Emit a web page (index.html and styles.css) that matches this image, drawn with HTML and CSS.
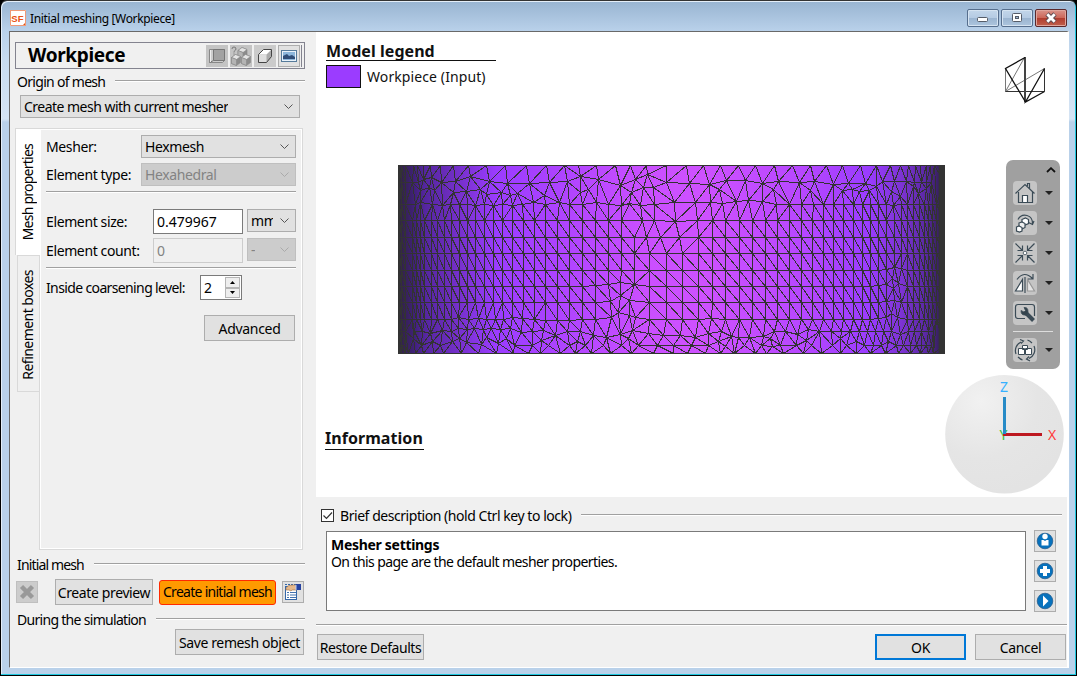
FILE: index.html
```html
<!DOCTYPE html>
<html lang="en">
<head>
<meta charset="utf-8">
<title>Initial meshing [Workpiece]</title>
<link rel="stylesheet" href="styles.css">
</head>
<body>
<div class="window">
  <header class="titlebar">
    <svg class="app-icon" viewBox="0 0 16 16"><rect width="16" height="16" fill="#fff"/><path d="M.5 0V15.5H16M0 .5H15.5V16" fill="none" stroke="#ee9a78"/><text x="1.3" y="11.5" class="logo-text">SF</text><path d="M13 15h2v-2z" fill="#e05010"/></svg>
    <span class="title">Initial meshing [Workpiece]</span>
    <div class="caption-buttons">
      <span class="cap"><svg width="30" height="16"><rect x="9.5" y="7.5" width="10" height="4" rx="1" fill="#fff" stroke="#555c68"/></svg></span>
      <span class="cap"><svg width="30" height="16"><rect x="10.5" y="3.5" width="9" height="8" rx="1" fill="#fff" stroke="#555c68"/><rect x="13.5" y="6.5" width="3" height="2" fill="#9db5d0" stroke="#555c68"/></svg></span>
      <span class="cap close"><svg width="30" height="16"><path d="M11 4l8 8M19 4l-8 8" stroke="#5d4a50" stroke-width="4.6"/><path d="M11.3 4.3l7.4 7.4M18.7 4.3l-7.4 7.4" stroke="#fff" stroke-width="2.8"/></svg></span>
    </div>
  </header>

  <main class="client">
    <aside class="left">
      <div class="object-header">
        <b>Workpiece</b>
        <div class="object-tools">
          <span class="tool off"><svg viewBox="0 0 22 22"><path d="M3.500 4.500h15v11l-2 2h-13z" fill="#ccc" stroke="#888"/><path d="M7.500 4.500h11v11h-11z" fill="#a2a2a2" stroke="#777"/><path d="M3.500 17.500l4-2" stroke="#777"/><path d="M4.500 5v12" stroke="#eee"/></svg></span>
          <span class="tool off"><svg viewBox="0 0 22 22"><g stroke="#888" stroke-width=".6"><g id="cube"><path d="M8 5.500l4-3 5 2v6l-4 3-5-2z" fill="#8c8c8c"/><path d="M8 5.500l4-3 5 2-4 3z" fill="#e4e4e4"/><path d="M8 5.500l5 2v6l-5-2z" fill="#b4b4b4"/></g><use href="#cube" x="-6.500" y="7"/><use href="#cube" x="3.500" y="7"/></g><path d="M2 4q0-2 2-2t2 2q0 1-2 2.500v1M4 8.500v1" fill="none" stroke="#777"/></svg></span>
          <span class="tool"><svg viewBox="0 0 22 22"><path d="M4.500 9.500l5-5h8v7l-5 6h-8z" fill="#aaa"/><path d="M4.500 9.500l5-5h8l-5 5z" fill="#fff"/><path d="M4.500 9.500h8v8h-8z" fill="#dedede"/><path d="M4.500 9.500l5-5h8v7l-5 6h-8z" fill="none" stroke="#444"/></svg></span>
          <span class="tool lit"><svg viewBox="1 1 20 20"><rect x="3.500" y="5.500" width="15" height="11" fill="#e9f2fa" stroke="#567b9b"/><rect x="5" y="7" width="12" height="8" fill="#8db7dc"/><path d="M5 11l2-1 2-1 2 2 3-1 3 2v2H5z" fill="#304e78"/></svg></span>
        </div>
      </div>

      <div class="group-title origin"><span>Origin of mesh</span><i></i></div>
      <div class="combo combo-origin"><span>Create mesh with current mesher</span><svg class="chev"><path d="M.5 .5l4 4 4-4"/></svg></div>

      <section class="tabs">
        <nav>
          <div class="tab active"><span>Mesh properties</span></div>
          <div class="tab"><span>Refinement boxes</span></div>
        </nav>
        <div class="page">
          <div class="row"><label>Mesher:</label><div class="combo wide"><span>Hexmesh</span><svg class="chev"><path d="M.5 .5l4 4 4-4"/></svg></div></div>
          <div class="row"><label>Element type:</label><div class="combo wide disabled"><span>Hexahedral</span><svg class="chev"><path d="M.5 .5l4 4 4-4"/></svg></div></div>
          <hr class="rule first">
          <div class="row size"><label>Element size:</label><div class="field">0.479967</div><div class="combo unit"><span>mm</span><svg class="chev"><path d="M.5 .5l4 4 4-4"/></svg></div></div>
          <div class="row size"><label>Element count:</label><div class="field disabled">0</div><div class="combo unit disabled"><span>-</span><svg class="chev"><path d="M.5 .5l4 4 4-4"/></svg></div></div>
          <hr class="rule second">
          <div class="row coarse"><label>Inside coarsening level:</label><div class="field spin">2<div class="spin-buttons"><span><svg width="5" height="3"><path d="M0 3L2.500 0 5 3z"/></svg></span><span><svg width="5" height="3"><path d="M0 0L2.500 3 5 0z"/></svg></span></div></div></div>
          <div class="button advanced">Advanced</div>
        </div>
      </section>

      <div class="group-title initial"><span>Initial mesh</span><i></i></div>
      <div class="mesh-actions">
        <span class="icon-button off"><svg viewBox="1 1 20 20"><path d="M5.500 5.500l11 11M16.500 5.500l-11 11" stroke="#999" stroke-width="4.500"/></svg></span>
        <div class="button preview">Create preview</div>
        <div class="button primary">Create initial mesh</div>
        <span class="icon-button"><svg viewBox="1 1 20 20"><rect x="3.500" y="5.500" width="11" height="13" fill="#fff" stroke="#3567a8"/><path d="M3 3.500h12" stroke="#3567a8" stroke-dasharray="2 1"/><path d="M5 11.500h2m1 0h6M5 14h2m1 0h6M5 16.500h2m1 0h6" stroke="#4272ad"/><path d="M4 7q2-3 6-3h5v5h-5l-1 1-2-1H4z" fill="#e7b98a" stroke="#986b44" stroke-width=".6"/><path d="M14 3h5v6h-5z" fill="#2743a0"/><path d="M14 4v5" stroke="#b8cdf6"/></svg></span>
      </div>
      <div class="group-title during"><span>During the simulation</span><i></i></div>
      <div class="button save">Save remesh object</div>
    </aside>

    <section class="right">
      <div class="viewport">
        <div class="legend">
          <h2>Model legend</h2>
          <div class="legend-item"><i></i><span>Workpiece (Input)</span></div>
        </div>
        <h2 class="information">Information</h2>
        <svg class="mesh" width="547" height="189" viewBox="398 165 547 189">
          <defs><linearGradient id="skin" gradientUnits="userSpaceOnUse" x1="398" x2="945" y1="0" y2="0">
            <stop offset="0" stop-color="#333"/><stop offset=".006" stop-color="#32224a"/><stop offset=".03" stop-color="#40207a"/><stop offset=".05" stop-color="#5526a0"/><stop offset=".09" stop-color="#6a2cbc"/><stop offset=".18" stop-color="#9b3cff"/><stop offset=".27" stop-color="#a941ff"/><stop offset=".45" stop-color="#ca4fff"/><stop offset=".56" stop-color="#ce51ff"/><stop offset=".74" stop-color="#b747ff"/><stop offset=".86" stop-color="#9a3cff"/><stop offset=".92" stop-color="#7d33d4"/><stop offset=".965" stop-color="#5a28a4"/><stop offset=".987" stop-color="#3a2066"/><stop offset=".99" stop-color="#333"/><stop offset="1" stop-color="#333"/>
          </linearGradient></defs>
          <rect x="398" y="165" width="547" height="189" fill="url(#skin)"/>
          <path id="edges" class="edges"/>
          <rect x="398.500" y="165.500" width="546" height="188" fill="none" stroke="#333"/>
        </svg>
        <svg class="camera" width="44" height="50" viewBox="1004 56 44 50"><path d="M1005.500 68.500v23M1005.500 91.500l19-34M1005.500 91.500l39-23" stroke="#777" fill="none"/><path d="M1005.500 91.500h39v-23" stroke="#333" fill="none"/><path d="M1025 57v45" stroke="#444" stroke-width="2"/><path d="M1044.500 91.500l-19 10.500 19-33.500M1025 57.500l-19.500 11L1025.500 102" stroke="#111" stroke-width="1.300" fill="none"/></svg>
        <div class="toolbar">
          <svg class="collapse" width="10" height="6"><path d="M1 5l4-3.800L9 5" fill="none" stroke="#111" stroke-width="1.800"/></svg>
          <div class="vtool"><svg viewBox="0 0 24 24"><path d="M2.500 12.500L12 3.500l9.500 9M14.500 5V2.500h2V7.500M5.500 11v10.500h14V11"/><path d="M9.500 21.500v-7h5v7z" fill="#fff"/></svg><b></b></div>
          <div class="vtool"><svg viewBox="0 0 24 24"><path d="M5 8.500Q8 3 14 4.500t5.500 9M15.500 11.500l4 2 1.500-3.500"/><path d="M9 8.500l3.500-1.500 3 1.500v4l-3.500 1.500-3-1z" fill="#fff"/><path d="M6 12l3-1 3 1.500v4L9 18l-3-1.500z" fill="#eee"/><path d="M3.500 16l2.500-1 3 1.500v3.500l-2.500 1-3-1z" fill="#fff"/></svg><b></b></div>
          <div class="vtool"><svg viewBox="0 0 24 24"><path d="M2.500 2.500l7 7m0-5v5h-5M21.500 2.500l-7 7m0-5v5h5M2.500 21.500l7-7m0 5v-5h-5M21.500 21.500l-7-7m0 5v-5h5"/><circle cx="12" cy="12" r="1.800" fill="#fff" stroke-width=".8"/></svg><b></b></div>
          <div class="vtool"><svg viewBox="0 0 24 24"><path d="M9.500 8.500v11.500h-7z" fill="#fff"/><path d="M14.500 8.500v11.500h7z" fill="#e4e4e4" stroke="#999"/><path d="M12 6v16M4 8.500Q11-1 19.500 7.500M20 3v5h-5"/></svg><b></b></div>
          <div class="vtool"><svg viewBox="0 0 24 24"><path d="M12 17.500H5q-2.500 0-2.500-2.500V6q0-2.500 2.500-2.500h14q2.500 0 2.500 2.500v9"/><path d="M12.500 11.500l8 8" stroke-width="4"/><path d="M8 9.500l3 1.500 1.500-1.500L11 6.500q4-.5 4 4t-3.500 3.500Q8 14 8 9.500z" fill="#34434d" stroke-width=".8"/></svg><b></b></div>
          <hr>
          <div class="vtool"><svg viewBox="0 0 24 24"><path d="M8 4A9.500 9.500 0 0 0 3 16M16 20.500A9.500 9.500 0 0 0 21 8M5 19Q7.500 21.500 9.500 21.800M19 5Q16.500 2.500 14.500 2.200M7 1.500L10.500 3 8 5.500M17 23l-3.500-2 2.500-2.500"/><path d="M5.500 10.500h6v6h-6zM12.500 10.500h6v6h-6zM9.500 7.500h5v4h-5z" fill="#fff" stroke-width="1"/></svg><b></b></div>
        </div>
        <svg class="axes" width="120" height="120" viewBox="944 374 120 120"><defs><radialGradient id="ball" cx=".3" cy=".22" r=".8"><stop offset="0" stop-color="#f1f1f1"/><stop offset=".6" stop-color="#e5e5e5"/><stop offset="1" stop-color="#e3e3e3"/></radialGradient></defs><circle cx="1004.500" cy="434.300" r="59.300" fill="url(#ball)"/><text x="999.500" y="440" fill="#38c438">Y</text><path d="M1003 434.500h39" stroke="#bd1820" stroke-width="3"/><path d="M1004.500 397v37" stroke="#288bc7" stroke-width="3"/><text x="1000" y="392" fill="#36b1ff">Z</text><text x="1048" y="440" fill="#ff3b3b">X</text></svg>
      </div>

      <div class="group-title brief"><span class="check"><svg width="11" height="11"><path d="M1.500 5.500l3 3 5.500-6" fill="none" stroke="#333" stroke-width="1.200"/></svg></span><span>Brief description (hold Ctrl key to lock)</span><i></i></div>
      <div class="description">
        <div class="description-text"><b>Mesher settings</b><p>On this page are the default mesher properties.</p></div>
        <div class="help-buttons">
          <span class="icon-button"><svg viewBox="1 1 20 20"><circle cx="11" cy="11" r="7.800" fill="#0872bd" stroke="#1c5586" stroke-width=".7"/><circle cx="11" cy="6.500" r="2.700" fill="#fff"/><path d="M7.500 10h2l1.500 1 1.500-1h2v5.500h-7z" fill="#fff"/></svg></span>
          <span class="icon-button"><svg viewBox="1 1 20 20"><circle cx="11" cy="11" r="7.800" fill="#0872bd" stroke="#1c5586" stroke-width=".7"/><path d="M11 6v10M6 11h10" stroke="#fff" stroke-width="4"/></svg></span>
          <span class="icon-button"><svg viewBox="1 1 20 20"><circle cx="11" cy="11" r="7.800" fill="#0872bd" stroke="#1c5586" stroke-width=".7"/><path d="M9 5.500l5.500 5.500L9 16.500z" fill="#fff"/></svg></span>
        </div>
      </div>
      <hr class="rule bottom">
      <footer>
        <div class="button restore">Restore Defaults</div>
        <div class="button ok">OK</div>
        <div class="button cancel">Cancel</div>
      </footer>
    </section>
  </main>
</div>
<script src="mesh.js"></script>
</body>
</html>
```

FILE: styles.css
```css
* { box-sizing: border-box; }
body { margin: 0; background: #000; font: 14px/17px "Noto Sans", "Open Sans", sans-serif; letter-spacing: -0.38px; color: #000; overflow: hidden; }
svg { display: block; }
h2, p, hr { margin: 0; border: 0; }
.window { width: 1077px; height: 676px; padding: 0 7px 7px 8px; border: 1px solid #000; border-top: 1px solid #333; border-radius: 7px 7px 0 0; background: linear-gradient(#98b4d1, #b9d1ea 30px, #c8dcf0 60px, #d5e4f4 118px, #b9d1ea 121px); box-shadow: inset -1px -1px #1fc8df, inset 1px 1px #e4eef8; }
.titlebar { height: 30px; display: flex; align-items: center; padding: 3px 0 0 1px; }
.app-icon { width: 16px; height: 16px; }
.logo-text { font: bold 9.500px "Liberation Sans", sans-serif; fill: #e85014; letter-spacing: 0; }
.title { font-size: 12px; margin: 2px 0 0 4px; letter-spacing: -0.35px; white-space: nowrap; }
.caption-buttons { margin-left: auto; display: flex; gap: 2px; padding: 1px 2px 0 0; }
.cap { width: 32px; height: 18px; border: 1px solid #566e8d; border-radius: 2px; background: linear-gradient(#c3d6ea, #b5cbe3 48%, #9ab4d0 50%, #adc5de); box-shadow: inset 0 0 0 1px #d5e3f1; }
.cap.close { background: linear-gradient(#d9938a, #cc685a 48%, #b03b2d 50%, #c0604d); border-color: #59282c; box-shadow: inset 0 0 0 1px #dfa59c; }
.client { height: 637px; display: flex; background: #f0f0f0; border: solid; border-width: 1px 2px 1px 1px; border-color: #696969 #fff #fff #696969; }
.left { width: 306px; padding: 10px 11px 0 5px; }
.object-header { height: 27px; border: 1px solid #83838f; display: flex; align-items: center; padding-left: 12px; }
.object-header b { font-size: 19px; letter-spacing: -0.35px; }
.object-tools { margin-left: auto; display: flex; gap: 2px; padding-right: 1px; border-right: 1px solid #83838f; margin-right: 2px; }
.tool { width: 22px; height: 22px; background: #cbcbcb; }
.tool.off { background: #c4c4c4; }
.tool.lit { background: #e1e1e1; border: 1px solid #adadad; }
.group-title { display: flex; align-items: center; height: 18px; white-space: nowrap; letter-spacing: -0.7px; }
.group-title i { flex: 1; height: 2px; background: linear-gradient(#a0a0a0 50%, #fff 50%); margin-left: 10px; }
.origin { margin-top: 3px; padding-left: 2px; }
.combo, .button, .icon-button { background: #e1e1e1; border: 1px solid #adadad; }
.combo { height: 23px; display: flex; align-items: center; padding: 0 6px 0 3px; white-space: nowrap; overflow: hidden; }
.combo span { overflow: hidden; }
.chev { width: 9px; height: 6px; margin-left: auto; flex: none; fill: none; stroke: #555; }
.combo.disabled { background: #ccc; border-color: #bfbfbf; color: #838383; }
.combo.disabled .chev { stroke: #aaa; }
.combo-origin { width: 280px; margin: 5px 0 0 5px; letter-spacing: -0.52px; }
.tabs { margin-top: 10px; width: 288px; height: 422px; display: flex; }
nav { width: 25px; margin-right: -1px; display: flex; flex-direction: column; position: relative; padding-left: 2px; }
.tab { width: 23px; height: 137px; display: flex; align-items: center; justify-content: center; border: 1px solid #d9d9d9; letter-spacing: -0.55px; padding-top: 2px; }
.tab.active { width: 25px; height: 127px; margin-left: -2px; background: #fff; border-bottom: 0; border-right: 0; letter-spacing: -0.76px; padding-top: 0; }
.tab span { writing-mode: vertical-rl; transform: rotate(180deg); white-space: nowrap; }
.tab:not(.active) span, .tab.active span { margin-right: 2px; }
.page { flex: 1; border: 1px solid #d9d9d9; box-shadow: inset 0 0 0 1px #fff; padding: 6px 6px 0 6px; }
.row { display: flex; align-items: center; height: 23px; margin-bottom: 5px; white-space: nowrap; }
.combo.wide { width: 155px; margin-left: auto; }
.rule { height: 2px; background: linear-gradient(#a0a0a0 50%, #fff 50%); }
.rule.first { margin-bottom: 16px; }
.size { height: 25px; margin-bottom: 4px; }
.size label { width: 107px; }
.field { height: 25px; width: 90px; background: #fff; border: 1px solid #7a7a7a; padding: 3px 3px; letter-spacing: 0; }
.field.disabled { background: #f0f0f0; border-color: #ccc; color: #838383; }
.combo.unit { width: 49px; margin: -2px 0 0 auto; }
.unit span { max-width: 22px; letter-spacing: -0.3px; }
.rule.second { margin-top: 4px; }
.coarse { height: 25px; margin: 6px 0 15px; letter-spacing: -0.63px; }
.coarse label { width: 154px; }
.field.spin { width: 42px; padding: 1px 1px 1px 3px; line-height: 22px; display: flex; }
.spin-buttons { width: 15px; margin-left: auto; display: flex; flex-direction: column; }
.spin-buttons span { flex: 1; border: 1px solid #b5b5b5; background: #eee; display: flex; align-items: center; justify-content: center; }
.button { height: 26px; display: flex; align-items: center; justify-content: center; white-space: nowrap; padding-top: 1px; }
.advanced { width: 91px; margin: 0 1px 0 auto; letter-spacing: -0.3px; }
.initial { margin-top: 5px; padding-left: 2px; letter-spacing: -0.85px; }
.mesh-actions { display: flex; align-items: center; height: 26px; margin: 6px 0 0 1px; }
.icon-button { width: 22px; height: 22px; flex: none; }
.icon-button.off { background: #ccc; border-color: #bfbfbf; }
.preview { width: 98px; margin: 0 6px 0 17px; }
.primary { width: 117px; height: 25px; margin-right: 6px; background: #ff9a00; border: 1px solid #ff2a00; border-radius: 3px; padding: 0 0 2px; letter-spacing: -0.72px; }
.during { margin-top: 5px; padding-left: 2px; }
.save { width: 129px; margin: 1px 1px 0 auto; }
.right { flex: 1; min-width: 0; }
.viewport { height: 465px; background: #fff; position: relative; }
.viewport h2 { font-size: 16px; line-height: 18px; color: #111; letter-spacing: 0.05px; border-bottom: 1px solid #111; white-space: nowrap; }
.legend { position: absolute; left: 10px; top: 10px; width: 170px; }
.legend-item { display: flex; align-items: center; margin-top: 4px; gap: 6px; color: #111; letter-spacing: 0.1px; }
.legend-item i { width: 35px; height: 23px; border: 1px solid #111; background: #9b3cff; }
.information { position: absolute; left: 9px; top: 397px; width: 99px; height: 21px; }
.mesh { position: absolute; left: 82px; top: 133px; }
.edges { fill: none; stroke: #333; stroke-width: 1; shape-rendering: crispEdges; }
.camera { position: absolute; left: 688px; top: 24px; }
.axes { position: absolute; left: 628px; top: 342px; font: 14px "Noto Sans", sans-serif; }
.toolbar { position: absolute; left: 690px; top: 128px; width: 54px; height: 209px; border-radius: 7px; background: #a0a0a0; padding: 6px 7px 0; display: flex; flex-direction: column; gap: 6px; }
.collapse { align-self: flex-end; margin: 1px -3px 2px 0; flex: none; }
.vtool { display: flex; align-items: center; gap: 11px; }
.vtool svg { width: 24px; height: 24px; flex: none; border-radius: 4px; background: #c5c5c5; fill: none; stroke: #3b4b56; stroke-width: 1.200; }
.vtool b { flex: none; border: 4px solid transparent; border-top-color: #222; border-bottom: 0; margin-left: -3px; }
.toolbar hr { width: 40px; height: 1px; background: #ddd; flex: none; }
.brief { margin: 9px 5px 0 5px; letter-spacing: -0.45px; }
.check { width: 13px; height: 13px; border: 1px solid #333; background: #fff; margin-right: 6px; }
.description { display: flex; margin: 7px 10px 0 10px; gap: 8px; height: 81px; }
.description-text { width: 700px; height: 80px; background: #fff; border: 1px solid #7a7a7a; padding: 4px 4px; letter-spacing: -0.58px; }
.description-text b { display: block; letter-spacing: -0.3px; }
.help-buttons { display: flex; flex-direction: column; gap: 8px; margin-top: -1px; }
.rule.bottom { margin-top: 12px; }
footer { display: flex; margin: 8px 1px 0; gap: 9px; }
.restore { width: 107px; margin-right: auto; letter-spacing: -0.45px; }
.ok, .cancel { width: 91px; }
.ok { border: 2px solid #0078d7; }
```

FILE: mesh.js
```javascript
// Vertices of the cylinder surface in units of a third of a pixel.
// Each row: [default y, x or [x, y], ...]. The right half starts 840 units further.
const edgeL = [27, 34, 46];
const edgeR = [822];
const L = [67,80,91,104,123,143,164,183,208,232,256,283,310,338,367,400,434,467,502,538,577,617,655,694,733,778,828];
const R = [38,86,127,166,208,247,286,323,358,394,428,460,490,520,549,576,602,626,650,673,694,713,731,748,762,775,787,800];
const upTo = (a, m) => a.filter(x => x <= m);
const from = (a, m) => a.filter(x => x >= m);
const rows = [
  [31, [70,83,100,122,151,189,236,288,345,408,468,524,565,619,676,720,770,828], [49,99,152,206,257,312,366,420,470,518,570,620,660,690,715,735,752,768,780,792]],
  [82, [68,85,[100,73],[125,68],155,[197,80],[242,65],[297,80],[352,84],[418,84],[477,83],[533,80],[572,64],[625,73],[690,90],[735,72],[772,58],828], [[58,84],[118,88],[168,77],[225,76],[278,84],[325,78],387,[432,79],[490,87],[534,84],[587,86],[636,80],[672,78],[710,80],732,755,770,785]],
  [108, [[90,105],[118,97],[133,107],[190,112],228,[270,103],[290,117],[333,112],[360,122],[383,115],[463,122],[570,112],[595,103],[725,112],[760,98],[790,98]], [[147,103],[310,103],[420,105],[516,106],[548,104],568,[598,105],[620,95],[665,110],[690,125],[730,94],[745,115],[768,100]]],
  [147, [75,[90,143],128,[158,150],182,208,232,[256,150],283,[310,150],338,[367,152],398,[430,142],467,[508,142],538,577,[620,143],655,[693,150],[717,145],[752,152],793], [[14,142],[75,143],[122,143],[156,146],[200,138],[235,136],[278,140],320,358,395,430,460,490,[520,149],549,576,602,626,650,[670,150],694,713,731,748,762,775,787,800]],
  [197, [...upTo(L,694),758,793], [[17,199],82,...from(R,127)]],
  [247, [...upTo(L,733),768,810], [28,...from(R,86)]],
  [296, L, R],
  [346, L, [...upTo(R,626),[650,342],[673,338],[694,341],...from(R,713)]],
  [395, [...upTo(L,577),[617,391],[655,388],[691,383],[733,388],[778,393],828], [...upTo(R,602),[626,391],[650,387],[668,370],[685,384],[670,401],...from(R,713)]],
  [443, [...upTo(L,617),[660,438],[690,421],[717,435],778,828], [...upTo(R,626),[650,440],[673,437],[694,442],...from(R,713)]],
  [478, [[686,472],[717,482]], [[665,474]]],
  [494, [...upTo(L,183),[205,487],235,[265,489],290,315,340,[367,486],[397,490],434,[467,497],[502,497],[538,497],577,617,[665,487],[735,487],778,828], [38,86,[125,490],...upTo(from(R,166),602),[626,491],[650,487],[682,487],...from(R,713)]],
  [530, [72,97,[122,535],[158,526],183,[205,521],[232,523],[252,520],[280,522],[305,521],[330,523],[360,521],[393,533],428,[460,525],[497,541],533,570,[610,540],[650,546],[690,538],[728,526],[775,535],[820,541]], [[30,541],[75,546],[115,534],153,[183,544],[205,546],[237,548],[281,544],[312,528],345,[382,537],[414,522],447,483,513,540,567,592,615,640,663,[690,538],715,732,755,775,790]],
  [570, [[70,550],95,[128,560],150,[188,560],[207,550],[230,562],[273,567],[290,548],[325,565],[350,550],373,428,[455,555],475,538,[562,560],585,640,695,[715,550],745,803], [10,63,115,[145,558],[166,574],223,273,[306,575],[300,550],332,380,[410,555],425,487,[510,550],530,[560,558],582,610,634,[655,560],680,700,720,738,755,770,785]],
  [595, [55,75,100,130,160,215,265,318,370,415,450,512,555,605,660,725,790,850], [52,105,152,192,255,290,340,400,455,510,560,600,645,685,720,750,775,790]]
];

const points = [];
for (const [y, left, right] of rows) {
  const put = (p, off) => points.push(Array.isArray(p) ? [p[0] + off, p[1]] : [p + off, y]);
  const silhouette = y !== 478 && y !== 108;
  [...(silhouette ? edgeL : []), ...left].forEach(p => put(p, 0));
  [...right, ...(silhouette ? edgeR : [])].forEach(p => put(p, 840));
}

// Unroll the cylinder so triangles stay regular near the silhouette.
const flat = points.map(([x, y], i) => {
  const s = Math.max(-1, Math.min(1, (x - 844) / 821));
  return [Math.asin(s) * 821 - y * 0.03 + (i % 7) * 0.0003, y + (i % 5) * 0.0003];
});
const n = flat.length;
flat.push([-20000, -10000], [20000, -10000], [0, 30000]);

function triangle(a, b, c) {
  const [ax, ay] = flat[a], bx = flat[b][0] - ax, by = flat[b][1] - ay, cx = flat[c][0] - ax, cy = flat[c][1] - ay;
  const d = 2 * (bx * cy - by * cx), bb = bx * bx + by * by, cc = cx * cx + cy * cy;
  const ux = (cy * bb - by * cc) / d, uy = (bx * cc - cx * bb) / d;
  return { v: [a, b, c], x: ux + ax, y: uy + ay, r: ux * ux + uy * uy };
}

let tris = [triangle(n, n + 1, n + 2)];
for (let i = 0; i < n; i++) {
  const [x, y] = flat[i], open = new Map(), keep = [];
  for (const t of tris) {
    if ((t.x - x) ** 2 + (t.y - y) ** 2 >= t.r) { keep.push(t); continue; }
    for (let k = 0; k < 3; k++) {
      const a = t.v[k], b = t.v[(k + 1) % 3], key = Math.min(a, b) + "," + Math.max(a, b);
      if (open.has(key)) open.delete(key); else open.set(key, [a, b]);
    }
  }
  tris = keep;
  for (const [a, b] of open.values()) tris.push(triangle(a, b, i));
}

const seen = new Set();
let d = "";
for (const { v } of tris) {
  if (v.some(i => i >= n)) continue;
  for (let k = 0; k < 3; k++) {
    const a = Math.min(v[k], v[(k + 1) % 3]), b = Math.max(v[k], v[(k + 1) % 3]);
    if (seen.has(a * n + b)) continue;
    seen.add(a * n + b);
    const at = i => (Math.floor(points[i][0] / 3 + 390) + 0.5) + " " + (Math.floor(points[i][1] / 3 + 155) + 0.5);
    d += "M" + at(a) + "L" + at(b);
  }
}
document.getElementById("edges").setAttribute("d", d);
```
